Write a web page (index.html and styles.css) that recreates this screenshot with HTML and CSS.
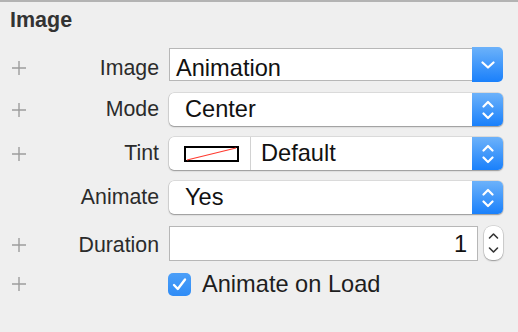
FILE: index.html
```html
<!DOCTYPE html>
<html>
<head>
<meta charset="utf-8">
<link rel="stylesheet" href="styles.css">
</head>
<body>
<div class="panel">
  <h2 class="title">Image</h2>
  <div class="rows">
    <div class="row row-field">
      <div class="lab"><svg class="plus" viewBox="0 0 14 14"><path d="M7 0V14M0 7H14"/></svg><span class="label">Image</span></div>
      <div class="combo">
        <div class="combo-field">Animation</div>
        <div class="blue-btn combo-btn"><svg width="14" height="8" viewBox="0 0 14 8"><path d="M1.5 1.5L7 6.5L12.5 1.5"/></svg></div>
      </div>
    </div>
    <div class="row">
      <div class="lab"><svg class="plus" viewBox="0 0 14 14"><path d="M7 0V14M0 7H14"/></svg><span class="label">Mode</span></div>
      <div class="popup">
        <div class="popup-text">Center</div>
        <div class="blue-btn"><svg width="12" height="20" viewBox="0 0 12 20"><path d="M1.5 6.5L6 2L10.5 6.5M1.5 13.5L6 18L10.5 13.5"/></svg></div>
      </div>
    </div>
    <div class="row">
      <div class="lab"><svg class="plus" viewBox="0 0 14 14"><path d="M7 0V14M0 7H14"/></svg><span class="label">Tint</span></div>
      <div class="popup">
        <div class="swatch-cell"><svg class="swatch" width="55" height="16" viewBox="0 0 55 16"><rect x="1" y="1" width="53" height="14" fill="#fff" stroke="#000" stroke-width="2"/><path d="M3 14L52 2" stroke="#ff3b30" stroke-width="1.2"/></svg></div>
        <div class="popup-text popup-text-tint">Default</div>
        <div class="blue-btn"><svg width="12" height="20" viewBox="0 0 12 20"><path d="M1.5 6.5L6 2L10.5 6.5M1.5 13.5L6 18L10.5 13.5"/></svg></div>
      </div>
    </div>
    <div class="row">
      <div class="lab"><span class="plus-space"></span><span class="label">Animate</span></div>
      <div class="popup">
        <div class="popup-text">Yes</div>
        <div class="blue-btn"><svg width="12" height="20" viewBox="0 0 12 20"><path d="M1.5 6.5L6 2L10.5 6.5M1.5 13.5L6 18L10.5 13.5"/></svg></div>
      </div>
    </div>
    <div class="row row-field row-duration">
      <div class="lab"><svg class="plus" viewBox="0 0 14 14"><path d="M7 0V14M0 7H14"/></svg><span class="label">Duration</span></div>
      <div class="numfield">1</div>
      <div class="stepper"><svg width="11" height="24" viewBox="0 0 11 24"><path d="M1.5 7L5.5 3L9.5 7M1.5 17L5.5 21L9.5 17"/></svg></div>
    </div>
    <div class="row row-check">
      <div class="lab"><svg class="plus" viewBox="0 0 14 14"><path d="M7 0V14M0 7H14"/></svg><span class="label"></span></div>
      <div class="check"><svg width="23" height="23" viewBox="0 0 23 23"><path d="M6 12L9.8 16L17 6.5"/></svg></div>
      <span class="check-text">Animate on Load</span>
    </div>
  </div>
</div>
</body>
</html>
```
FILE: styles.css
```css
html, body {
  margin: 0;
  background: #efefef;
  font-family: "Liberation Sans", Arial, sans-serif;
}
.panel {
  border-top: 2px solid #b3b3b3;
  height: 330px;
}
.title {
  margin: 0;
  padding: 6px 0 0 10px;
  font-size: 21.5px;
  line-height: 24px;
  font-weight: bold;
  color: #333;
}
.rows {
  margin-top: 15px;
  display: flex;
  flex-direction: column;
  gap: 11px;
}
.row {
  display: flex;
  align-items: center;
  height: 33px;
}
.row-field { height: 35px; }
.row-duration { height: 36px; }
.row-check { height: 24px; }
.lab {
  flex: none;
  width: 159px;
  display: flex;
  align-items: center;
}
.row-field .lab { padding-top: 7px; }
.row-duration .lab { padding-top: 4px; }
.plus {
  flex: none;
  width: 14px;
  height: 14px;
  margin-left: 12px;
  fill: none;
  stroke: #9d9d9d;
  stroke-width: 1.4;
}
.plus-space {
  flex: none;
  width: 14px;
  margin-left: 12px;
}
.label {
  flex: 1;
  text-align: right;
  font-size: 21.3px;
  color: #2b2b2b;
}
.combo {
  margin-left: 10px;
  width: 334px;
  display: flex;
  align-items: center;
}
.combo-field {
  flex: 1;
  height: 33px;
  box-sizing: border-box;
  border: 1px solid #b7b7b7;
  border-right: none;
  background: #fff;
  padding: 6px 0 0 6px;
  font-size: 23.6px;
  line-height: 26px;
  color: #111;
}
.blue-btn {
  flex: none;
  width: 31px;
  align-self: stretch;
  border-radius: 0 5px 5px 0;
  background: linear-gradient(#6cb2fa, #1a80fb);
  display: flex;
  align-items: center;
  justify-content: center;
}
.combo-btn {
  height: 35px;
  align-self: center;
}
.blue-btn svg {
  fill: none;
  stroke: #fff;
  stroke-width: 2.2;
  stroke-linecap: round;
  stroke-linejoin: round;
}
.popup {
  margin-left: 10px;
  width: 334px;
  height: 33px;
  background: #fff;
  border-radius: 5px;
  box-shadow: 0 0 0 0.5px rgba(0, 0, 0, 0.16), 0 1px 1.5px rgba(0, 0, 0, 0.32);
  display: flex;
}
.popup-text {
  flex: 1;
  padding-left: 16px;
  font-size: 23.6px;
  line-height: 33px;
  color: #111;
}
.popup-text-tint { padding-left: 10px; }
.swatch-cell {
  flex: none;
  width: 82px;
  box-sizing: border-box;
  border-right: 1px solid #d2d2d2;
  padding-left: 15px;
  display: flex;
  align-items: center;
}
.numfield {
  margin-left: 10px;
  width: 309px;
  height: 35px;
  box-sizing: border-box;
  border: 1px solid #b7b7b7;
  background: #fff;
  text-align: right;
  padding-right: 10px;
  font-size: 23.6px;
  line-height: 35px;
  color: #111;
}
.stepper {
  margin-left: 6px;
  width: 19px;
  height: 34px;
  background: #fff;
  border-radius: 8px;
  box-shadow: 0 0 0 0.5px rgba(0, 0, 0, 0.18), 0 1px 1.5px rgba(0, 0, 0, 0.3);
  display: flex;
  align-items: center;
  justify-content: center;
}
.stepper svg {
  fill: none;
  stroke: #333;
  stroke-width: 1.6;
  stroke-linecap: round;
  stroke-linejoin: round;
}
.check {
  margin-left: 9px;
  width: 23px;
  height: 23px;
  border-radius: 5px;
  background: linear-gradient(#4c9ff8, #2f8cf6);
  flex: none;
}
.check svg {
  display: block;
  fill: none;
  stroke: #fff;
  stroke-width: 2.4;
  stroke-linecap: round;
  stroke-linejoin: round;
}
.check-text {
  margin-left: 11px;
  font-size: 23.6px;
  color: #1e1e1e;
}
```
